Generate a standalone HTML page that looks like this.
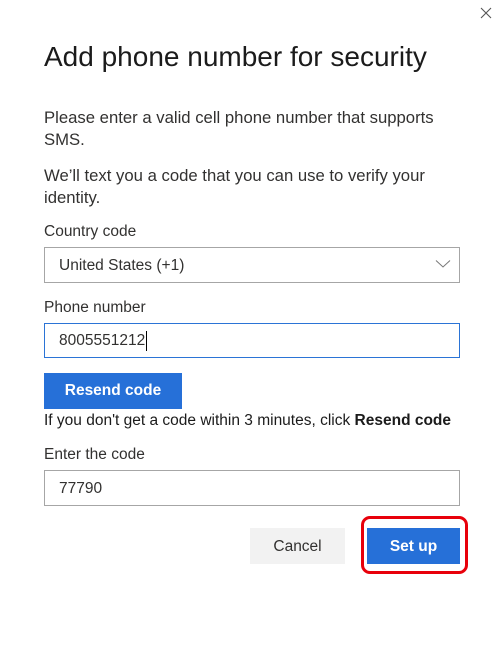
<!DOCTYPE html>
<html><head><meta charset="utf-8"><style>
*{margin:0;padding:0;box-sizing:border-box}
body{width:496px;height:652px;background:#fff;position:relative;font-family:"Segoe UI","Liberation Sans",sans-serif;color:#1b1b1b;overflow:hidden}
.a{position:absolute;white-space:nowrap}
.t{font-size:15.5px;color:#323130}
.box{position:absolute;left:44px;width:416px;border:1px solid #a6a6a6;background:#fff}
.btn{position:absolute;display:flex;align-items:center;justify-content:center;font-size:15.5px}
</style></head><body>
<svg class="a" style="left:480px;top:7px" width="12" height="12" viewBox="0 0 12 12"><path d="M1 1L11 11M11 1L1 11" stroke="#555" stroke-width="1.1"/></svg>
<div class="a" style="left:44px;top:41px;font-size:28px;color:#1b1b1b">Add phone number for security</div>
<div class="a t" style="left:44px;top:107px;line-height:22px;font-size:16.7px">Please enter a valid cell phone number that supports<br>SMS.</div>
<div class="a t" style="left:44px;top:165px;line-height:22px;font-size:16.7px">We’ll text you a code that you can use to verify your<br>identity.</div>
<div class="a t" style="left:44px;top:223px">Country code</div>
<div class="box" style="top:247px;height:36px"></div>
<div class="a t" style="left:59px;top:257px">United States (+1)</div>
<svg class="a" style="left:435px;top:259px" width="16" height="10" viewBox="0 0 16 10"><path d="M1 1.5L8 8L15 1.5" stroke="#777" fill="none" stroke-width="1"/></svg>
<div class="a t" style="left:44px;top:299px">Phone number</div>
<div class="box" style="top:323px;height:35px;border-color:#2b74d6"></div>
<div class="a t" style="left:59px;top:332px">8005551212</div>
<div class="a" style="left:146px;top:331px;width:1px;height:20px;background:#000"></div>
<div class="btn" style="left:44px;top:373px;width:138px;height:36px;background:#2670d8;color:#fff;font-weight:bold">Resend code</div>
<div class="a t" style="left:44px;top:412px;color:#1b1b1b">If you don't get a code within 3 minutes, click <b>Resend code</b></div>
<div class="a t" style="left:44px;top:446px">Enter the code</div>
<div class="box" style="top:470px;height:36px"></div>
<div class="a t" style="left:59px;top:480px">77790</div>
<div class="btn" style="left:250px;top:528px;width:95px;height:36px;background:#f2f2f2;color:#323130;padding-top:2px">Cancel</div>
<div class="btn" style="left:367px;top:528px;width:93px;height:36px;background:#2670d8;color:#fff;font-weight:bold;padding-top:2px">Set up</div>
<div class="a" style="left:361px;top:516px;width:107px;height:58px;border:3px solid #e8000b;border-radius:9px"></div>
</body></html>
